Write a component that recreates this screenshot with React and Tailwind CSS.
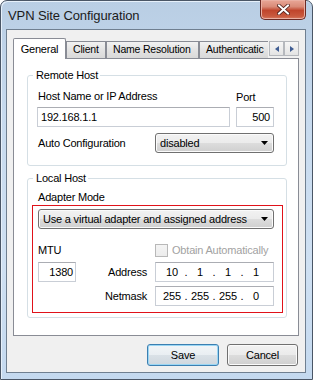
import { useState } from 'react';

// Win7 style "VPN Site Configuration" dialog

const field = 'h-[20px] border border-[#c9ced6] border-t-[#abadb3] bg-white';
const combo =
  'flex h-[20px] items-center justify-between rounded-[3px] border border-[#707070] bg-[linear-gradient(#f2f2f2_0%,#ebebeb_50%,#dddddd_50%,#cfcfcf_100%)] pl-[4px] pr-[5px] shadow-[inset_0_0_0_1px_#fbfbfb]';

function Arrow() {
  return (
    <svg width="7" height="4" viewBox="0 0 7 4">
      <path d="M0 0H7L3.5 4Z" fill="#000" />
    </svg>
  );
}

function Group({ title, className, children }) {
  return (
    <div className={`relative ml-[13px] w-[260px] rounded-[3px] border border-[#d5dfe5] ${className}`}>
      <span className="absolute -top-[7px] left-[5px] bg-white pl-[3px] pr-[2px] leading-[13px]">{title}</span>
      {children}
    </div>
  );
}

function IpField({ parts }) {
  return (
    <div className={`${field} flex items-center pl-[4px]`}>
      {parts.map((p, i) => (
        <div key={i} className="flex">
          {i > 0 && <span className="w-[4px] text-center">.</span>}
          <span className="w-[24px] text-center">{p}</span>
        </div>
      ))}
    </div>
  );
}

function Tab({ label, active, className }) {
  if (active) {
    return (
      <div className={`relative z-10 -mb-px flex h-[21px] items-center justify-center rounded-t-[2px] border border-b-0 border-[#898c95] bg-white ${className}`}>
        {label}
      </div>
    );
  }
  return (
    <div className={`flex h-[17px] items-center overflow-hidden whitespace-nowrap border border-b-0 border-[#898c95] bg-[linear-gradient(#f2f2f2,#e3e3e3_50%,#d9d9d9)] pl-[6px] ${className}`}>
      {label}
    </div>
  );
}

function ScrollBtn({ dir }) {
  return (
    <div className="flex h-[15px] w-[15px] items-center justify-center border border-[#b5b8bd] bg-[linear-gradient(#f6f6f6,#e4e4e4)]">
      <svg width="4" height="6" viewBox="0 0 4 6">
        <path d={dir === 'left' ? 'M4 0V6L0 3Z' : 'M0 0V6L4 3Z'} fill="#3f5d93" />
      </svg>
    </div>
  );
}

export default function App() {
  const [host] = useState('192.168.1.1');

  return (
    <div className="h-[380px] w-[313px] overflow-hidden font-['Liberation_Sans',Arial,sans-serif] text-[11px] tracking-[-0.2px] text-black">
      <div className="flex h-[380px] w-[313px] flex-col rounded-t-[7px] border border-[#4a5666] bg-[linear-gradient(180deg,#b9cee4_0%,#c7daee_30%,#cfe0f2_70%,#c4d9ef_100%)] pb-[6px] pl-[5px] pr-[6px] shadow-[inset_1px_1px_0_#e6f0fa]">
        {/* title bar */}
        <div className="flex h-[28px] shrink-0 items-start justify-between">
          <span className="ml-[2px] mt-[7px] text-[13px] leading-[16px] tracking-[-0.1px] text-[#1b1b1b]">
            VPN Site Configuration
          </span>
          <div className="-mt-px flex h-[20px] w-[46px] items-center justify-center rounded-b-[5px] border border-t-0 border-[#6b2a24] bg-[linear-gradient(#e9a797_0%,#d98b78_35%,#c0452c_55%,#c9593e_85%,#d77a60_100%)] shadow-[inset_0_0_0_1px_#eab0a3]">
            <svg width="13" height="11" viewBox="0 0 13 11">
              <path d="M2 1.5L11 9.5M11 1.5L2 9.5" stroke="#4c1e19" strokeWidth="3.6" strokeLinecap="square" />
              <path d="M2 1.5L11 9.5M11 1.5L2 9.5" stroke="#fff" strokeWidth="2" strokeLinecap="square" />
            </svg>
          </div>
        </div>

        {/* client area */}
        <div className="flex flex-1 flex-col border border-[#6f7f90] bg-[#f0f0f0]">
          {/* tabs */}
          <div className="ml-[6px] mt-[8px] flex h-[20px] items-end">
            <Tab label="General" active className="w-[53px]" />
            <Tab label="Client" className="w-[40px] text-[10.5px]" />
            <Tab label="Name Resolution" className="w-[93px] text-[10.5px]" />
            <Tab label="Authenticatic" className="w-[69px] border-r-0 text-[10.5px]" />
            <div className="ml-[1px] flex self-start pt-[3px]">
              <ScrollBtn dir="left" />
              <ScrollBtn dir="right" />
            </div>
          </div>

          {/* tab panel */}
          <div className="ml-[6px] flex h-[278px] w-[286px] flex-col border border-[#898c95] bg-white">
            <Group title="Remote Host" className="mt-[16px] h-[91px]">
              <div className="flex gap-[6px] pl-[9px] pt-[14px]">
                <div className="w-[193px]">
                  <div className="pl-px leading-[13px]">Host Name or IP Address</div>
                  <div className={`${field} mt-[4px] pl-[3px] leading-[18px]`}>{host}</div>
                </div>
                <div className="w-[38px]">
                  <div className="pt-px leading-[13px]">Port</div>
                  <div className={`${field} mt-[3px] text-right pr-[3px] leading-[18px]`}>500</div>
                </div>
              </div>
              <div className="mt-[6px] flex items-center pl-[9px]">
                <span className="w-[118px] pl-px">Auto Configuration</span>
                <div className={`${combo} w-[119px]`}>
                  <span>disabled</span>
                  <Arrow />
                </div>
              </div>
            </Group>

            <Group title="Local Host" className="mt-[12px] h-[140px]">
              <div className="pl-[10px] pt-[12px] leading-[13px]">Adapter Mode</div>
              <div className="ml-[4px] mt-px h-[108px] w-[251px] border border-[#e0121a]">
                <div className={`${combo} ml-[5px] mt-[3px] w-[236px]`}>
                  <span>Use a virtual adapter and assigned address</span>
                  <Arrow />
                </div>
                <div className="ml-[5px] mt-[14px] grid grid-cols-[62px_55px_119px] items-center">
                  <span className="h-[14px] leading-[14px]">MTU</span>
                  <span />
                  <div className="flex h-[14px] items-center gap-[4px] text-[#a2a2a2]">
                    <span className="h-[13px] w-[13px] border border-[#b8b8b8] bg-[linear-gradient(#f4f4f4,#ececec)]" />
                    <span>Obtain Automatically</span>
                  </div>

                  <div className={`${field} mt-[5px] w-[38px] pr-[2px] text-right leading-[18px]`}>1380</div>
                  <span className="mt-[5px] pr-[8px] text-right">Address</span>
                  <div className="mt-[5px]">
                    <IpField parts={['10', '1', '1', '1']} />
                  </div>

                  <span />
                  <span className="mt-[4px] pr-[8px] text-right">Netmask</span>
                  <div className="mt-[4px]">
                    <IpField parts={['255', '255', '255', '0']} />
                  </div>
                </div>
              </div>
            </Group>
          </div>

          {/* buttons */}
          <div className="mt-[8px] flex justify-end gap-[8px] pr-[7px]">
            <button className="h-[22px] w-[72px] rounded-[3px] border border-[#3c7fb1] bg-[linear-gradient(#f2f5f8_0%,#e9eef2_50%,#dae1e7_50%,#cfd7de_100%)] shadow-[inset_0_0_0_1px_#9ad6f4]">
              Save
            </button>
            <button className="h-[22px] w-[71px] rounded-[3px] border border-[#707070] bg-[linear-gradient(#f2f2f2_0%,#ebebeb_50%,#dddddd_50%,#cfcfcf_100%)] shadow-[inset_0_0_0_1px_#fbfbfb]">
              Cancel
            </button>
          </div>
        </div>
      </div>
    </div>
  );
}
